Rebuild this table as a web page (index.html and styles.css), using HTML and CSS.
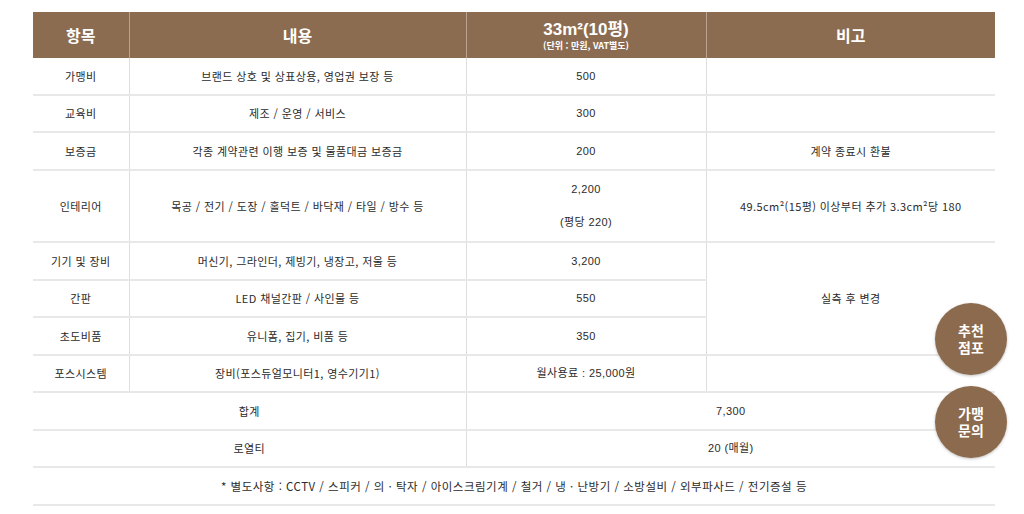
FILE: index.html
```html
<!DOCTYPE html>
<html lang="ko">
<head>
<meta charset="utf-8">
<title>창업비용</title>
<link rel="stylesheet" href="styles.css">
</head>
<body>
<div class="page">
  <table class="cost">
    <colgroup>
      <col class="c1"><col class="c2"><col class="c3"><col class="c4">
    </colgroup>
    <thead>
      <tr>
        <th>항목</th>
        <th>내용</th>
        <th><span class="size">33m²(10평)</span><span class="unit">(단위 : 만원, VAT별도)</span></th>
        <th>비고</th>
      </tr>
    </thead>
    <tbody>
      <tr><td class="name">가맹비</td><td>브랜드 상호 및 상표상용, 영업권 보장 등</td><td class="num">500</td><td></td></tr>
      <tr><td class="name">교육비</td><td>제조 / 운영 / 서비스</td><td class="num">300</td><td></td></tr>
      <tr><td class="name">보증금</td><td>각종 계약관련 이행 보증 및 물품대금 보증금</td><td class="num">200</td><td>계약 종료시 환불</td></tr>
      <tr class="tall"><td class="name">인테리어</td><td>목공 / 전기 / 도장 / 홀덕트 / 바닥재 / 타일 / 방수 등</td><td class="num"><span class="l1">2,200</span><span class="l2">(평당 220)</span></td><td>49.5cm²(15평) 이상부터 추가 3.3cm²당 180</td></tr>
      <tr><td class="name">기기 및 장비</td><td>머신기, 그라인더, 제빙기, 냉장고, 저울 등</td><td class="num">3,200</td><td rowspan="3">실측 후 변경</td></tr>
      <tr><td class="name">간판</td><td>LED 채널간판 / 사인물 등</td><td class="num">550</td></tr>
      <tr><td class="name">초도비품</td><td>유니폼, 집기, 비품 등</td><td class="num">350</td></tr>
      <tr><td class="name">포스시스템</td><td>장비(포스듀얼모니터1, 영수기기1)</td><td class="num">월사용료 : 25,000원</td><td></td></tr>
      <tr><td class="name" colspan="2">합계</td><td class="num" colspan="2">7,300</td></tr>
      <tr><td class="name" colspan="2">로열티</td><td class="num" colspan="2">20 (매월)</td></tr>
      <tr><td class="note" colspan="4">* 별도사항 : CCTV / 스피커 / 의 · 탁자 / 아이스크림기계 / 철거 / 냉 · 난방기 / 소방설비 / 외부파사드 / 전기증설 등</td></tr>
    </tbody>
  </table>
  <a class="badge badge-store">추천<br>점포</a>
  <a class="badge badge-ask">가맹<br>문의</a>
</div>
</body>
</html>
```

FILE: styles.css
```css
html, body {
  margin: 0;
  padding: 0;
  background: #ffffff;
}

body {
  font-family: "Noto Sans CJK KR", "Liberation Sans", sans-serif;
  color: #2b2b2b;
}

.page {
  position: relative;
  width: 1024px;
  height: 514px;
  box-sizing: border-box;
  padding: 12px 29px 0 33px;
}

.cost {
  width: 962px;
  border-collapse: collapse;
  table-layout: fixed;
}

.c1 { width: 96px; }
.c2 { width: 337px; }
.c3 { width: 240px; }
.c4 { width: 289px; }

.cost th {
  background: #8c6c50;
  color: #ffffff;
  height: 46px;
  padding: 0;
  font-size: 16px;
  font-weight: 700;
  text-align: center;
  vertical-align: middle;
  border-left: 1px solid #b8a390;
  border-right: 1px solid #b8a390;
}

.cost th:first-child { border-left: none; }
.cost th:last-child { border-right: none; }

.size {
  display: block;
  font-family: "Liberation Sans", "Noto Sans CJK KR", sans-serif;
  font-size: 17px;
  font-weight: 700;
  line-height: 18px;
  margin-top: 2px;
}

.unit {
  display: block;
  font-size: 9px;
  line-height: 13px;
  font-weight: 700;
}

.cost td {
  height: 35.5px;
  padding: 0;
  font-size: 11px;
  line-height: 16px;
  letter-spacing: 0.4px;
  text-align: center;
  vertical-align: middle;
  border-bottom: 2px solid #e8e8e8;
  border-left: 1px solid #dedede;
  border-right: 1px solid #dedede;
}

.cost td:first-child { border-left: none; }
.cost td:last-child { border-right: none; }

.cost tr.tall td { height: 70.5px; }

.name { color: #2b2b2b; }

.num {
  font-family: "Liberation Sans", "Noto Sans CJK KR", sans-serif;
  letter-spacing: 0.2px;
}

.l1, .l2 { display: block; }
.l2 { margin-top: 17px; }

.cost td.note {
  font-size: 11.5px;
  letter-spacing: 0.5px;
  border-left: none;
  border-right: none;
}

.badge {
  position: absolute;
  left: 935px;
  width: 72px;
  height: 72px;
  border-radius: 50%;
  background: #8c6a4d;
  color: #ffffff;
  font-size: 14px;
  font-weight: 700;
  line-height: 17px;
  display: flex;
  align-items: center;
  justify-content: center;
  text-align: center;
  box-shadow: 0 1px 3px rgba(0, 0, 0, 0.25);
  text-decoration: none;
}

.badge-store { top: 303px; }
.badge-ask { top: 386px; }
```
